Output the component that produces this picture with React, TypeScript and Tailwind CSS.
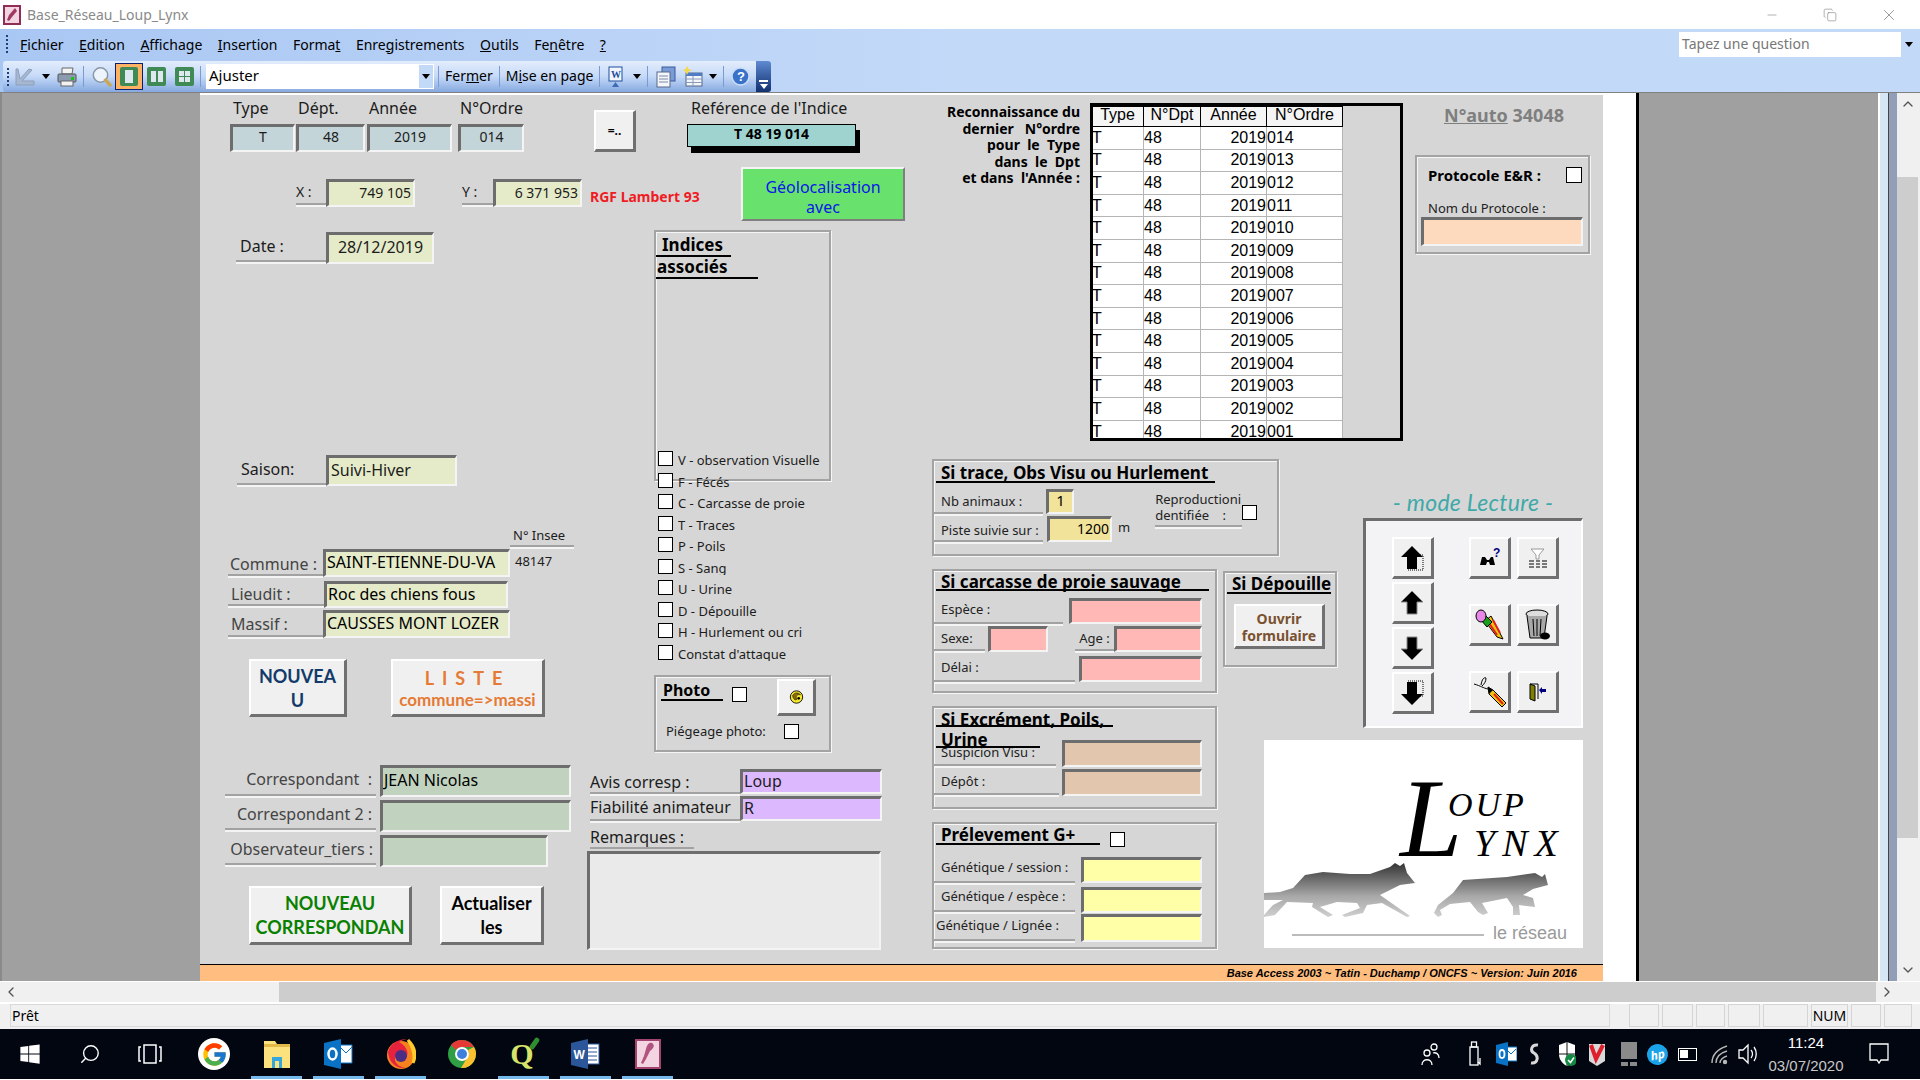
import type { ReactNode } from 'react'
import { ChevronLeft, ChevronRight, ChevronUp, ChevronDown, Minus, X as CloseIcon, Copy, Search } from 'lucide-react'
import { FaWindows } from 'react-icons/fa'
import { FcGoogle } from 'react-icons/fc'

type P = { className?: string; children?: ReactNode }

const Field = ({ className = '', children }: P) => (
  <div className={`box-border flex shrink-0 items-center overflow-hidden whitespace-nowrap border-t-[3px] border-l-[3px] border-r-2 border-b-2 border-t-[#6d6d6d] border-l-[#6d6d6d] border-r-[#f4f4f4] border-b-[#f4f4f4] pb-[3px] ${className}`}>
    {children}
  </div>
)

const Label = ({ className = '', children }: P) => (
  <div className={`box-border flex shrink-0 items-center whitespace-nowrap border-b-2 border-b-[#a2a2a2] shadow-[0_2px_0_#f4f4f4] ${className}`}>
    {children}
  </div>
)

const Raised = ({ className = '', children }: P) => (
  <button className={`box-border flex shrink-0 flex-col items-center justify-center border-t-2 border-l-2 border-t-white border-l-white border-r-[3px] border-b-[3px] border-r-[#707070] border-b-[#707070] bg-[#f0f0f0] ${className}`}>
    {children}
  </button>
)

const Check = ({ className = '' }: P) => (
  <span className={`box-border block h-[15px] w-[15px] shrink-0 border border-black bg-white ${className}`} />
)

const Group = ({ className = '', children }: P) => (
  <div className={`box-border border-2 border-[#a3a3a3] shadow-[1px_1px_0_#f6f6f6,inset_1px_1px_0_#f6f6f6] ${className}`}>
    {children}
  </div>
)

const Title = ({ className = '', children }: P) => (
  <div className={`box-border ml-[2px] flex items-center whitespace-nowrap border-b-2 border-b-black pl-[5px] text-[17px] font-bold text-black ${className}`}>
    {children}
  </div>
)

const Sep = ({ className = '' }: P) => <span className={`h-[21px] w-px shrink-0 bg-[#7a9bcf] ${className}`} />

const ArrowDrop = ({ className = '' }: P) => (
  <span className={`h-0 w-0 shrink-0 border-x-[4px] border-t-[5px] border-x-transparent border-t-black ${className}`} />
)

const menus: [string, string, string][] = [
  ['', 'F', 'ichier'],
  ['', 'E', 'dition'],
  ['', 'A', 'ffichage'],
  ['', 'I', 'nsertion'],
  ['Forma', 't', ''],
  ['Enre', 'g', 'istrements'],
  ['', 'O', 'utils'],
  ['Fe', 'n', 'être'],
  ['', '?', ''],
]

const ordres = ['014', '013', '012', '011', '010', '009', '008', '007', '006', '005', '004', '003', '002', '001']

const indices = [
  'V - observation Visuelle',
  'F - Fécés',
  'C - Carcasse de proie',
  'T - Traces',
  'P - Poils',
  'S - Sang',
  'U - Urine',
  'D - Dépouille',
  'H - Hurlement ou cri',
  "Constat d'attaque",
]

const statusCells = ['w-[30px]', 'w-[31px]', 'w-[29px]', 'w-[32px]', 'w-[45px]', 'w-[37px]', 'w-[30px]', 'w-[28px]']

function TitleBar() {
  return (
    <div className="flex h-[29px] items-center bg-white">
      <svg width="18" height="20" viewBox="0 0 18 20" className="ml-[3px]">
        <rect x="1" y="1" width="16" height="18" fill="#f3d5e2" stroke="#8f2d56" strokeWidth="2" />
        <path d="M12 3 L14 6 L9 12 L6 16 L4 15 L6 10 Z" fill="#a03a63" />
      </svg>
      <span className="ml-[6px] text-[14px] text-[#8a8a8a]">Base_Réseau_Loup_Lynx</span>
      <div className="ml-auto flex items-center text-[#7a7a7a]">
        <Minus size={14} strokeWidth={1} />
        <Copy size={14} strokeWidth={1} className="ml-[44px]" />
        <CloseIcon size={18} strokeWidth={1} className="ml-[43px] mr-[22px]" />
      </div>
    </div>
  )
}

function MenuBar() {
  return (
    <div className="flex h-[32px] items-center pb-[2px]">
      <span className="ml-[6px] h-[18px] w-[2px] border-l-2 border-dotted border-[#1b3f7a]" />
      <div className="ml-[12px] flex gap-[15.5px] text-[14px] text-black">
        {menus.map(([a, b, c]) => (
          <span key={a + b + c}>
            {a}
            <u>{b}</u>
            {c}
          </span>
        ))}
      </div>
      <div className="ml-auto mr-[4px] flex h-[25px] w-[237px] items-center bg-white pl-[3px] text-[14px] text-[#777]">
        <span className="pb-[2px]">Tapez une question</span>
        <span className="ml-auto flex h-full w-[15px] items-center justify-center bg-[#c3d9f8]">
          <ArrowDrop />
        </span>
      </div>
    </div>
  )
}

function Toolbar() {
  return (
    <div className="ml-[3px] flex h-[31px] w-[768px] items-center whitespace-nowrap rounded-l-[3px] rounded-r-[3px] bg-gradient-to-b from-[#e3edfc] via-[#c5d9f7] to-[#86a9e0] text-[14px] text-black">
      <span className="ml-[4px] h-[18px] w-[2px] border-l-2 border-dotted border-[#1b3f7a]" />
      <svg width="20" height="20" viewBox="0 0 20 20" className="ml-[6px]">
        <path d="M1 2 L1 18 L19 18 L19 14 L7 14 L17 3 L14 2 L5 12 L3 2 Z" fill="#a7b7cf" stroke="#8ba0bd" />
      </svg>
      <ArrowDrop className="ml-[7px] border-t-[#7d8ba2]" />
      <svg width="20" height="20" viewBox="0 0 20 20" className="ml-[7px]">
        <path d="M5 1 H16 L15 7 H5 Z" fill="#f4f4f4" stroke="#666" />
        <rect x="1" y="7" width="18" height="8" rx="1" fill="#8d9bb0" stroke="#555" />
        <rect x="4" y="14" width="12" height="5" fill="#f2f2f2" stroke="#666" />
        <rect x="14" y="10" width="3" height="3" fill="#18c218" />
      </svg>
      <Sep className="ml-[6px]" />
      <svg width="20" height="22" viewBox="0 0 20 22" className="ml-[8px]">
        <circle cx="8.5" cy="9" r="7.2" fill="#eef4fb" stroke="#8a97a8" strokeWidth="1.5" />
        <path d="M13.5 14 L18 19" stroke="#c8a85a" strokeWidth="3.5" strokeLinecap="round" />
      </svg>
      <span className="ml-[3px] flex h-[27px] w-[28px] items-center justify-center border border-[#0a1f6e] bg-[#ffb264]">
        <span className="flex h-[19px] w-[18px] items-center justify-center rounded-[2px] bg-[#3f8a55]">
          <span className="h-[13px] w-[8px] bg-[#dfe8ee]" />
        </span>
      </span>
      <span className="ml-[4px] flex h-[19px] w-[19px] items-center justify-center gap-[2px] rounded-[2px] bg-[#3f8a55]">
        <span className="h-[11px] w-[5px] bg-[#dfe8ee]" />
        <span className="h-[11px] w-[5px] bg-[#dfe8ee]" />
      </span>
      <span className="ml-[9px] grid h-[19px] w-[19px] grid-cols-2 place-items-center rounded-[2px] bg-[#3f8a55] p-[3px]">
        <span className="h-[5px] w-[5px] bg-[#dfe8ee]" />
        <span className="h-[5px] w-[5px] bg-[#dfe8ee]" />
        <span className="h-[5px] w-[5px] bg-[#dfe8ee]" />
        <span className="h-[5px] w-[5px] bg-[#dfe8ee]" />
      </span>
      <Sep className="ml-[6px]" />
      <div className="ml-[5px] flex h-[25px] w-[228px] items-center bg-white pl-[3px] text-[15px]">
        <span className="pb-[2px]">Ajuster</span>
        <span className="ml-auto flex h-full w-[16px] items-center justify-center border border-white bg-[#c3d9f8]">
          <ArrowDrop />
        </span>
      </div>
      <Sep className="ml-[4px]" />
      <span className="ml-[6px] pb-[2px]">Fer<u>m</u>er</span>
      <Sep className="ml-[6px]" />
      <span className="ml-[6px] pb-[2px]">M<u>i</u>se en page</span>
      <Sep className="ml-[6px]" />
      <svg width="15" height="22" viewBox="0 0 15 22" className="ml-[8px]">
        <rect x="1" y="1" width="13" height="14" fill="#f2f6fc" stroke="#1d4f9c" />
        <text x="3" y="12" fontSize="10" fontWeight="700" fill="#1d4f9c" fontFamily="Liberation Serif">W</text>
        <path d="M4 21 L7.5 16 L11 21 Z" fill="#3d6bb5" />
      </svg>
      <ArrowDrop className="ml-[10px]" />
      <Sep className="ml-[6px]" />
      <svg width="20" height="22" viewBox="0 0 20 22" className="ml-[8px]">
        <rect x="6" y="1" width="13" height="14" fill="#7a9cd6" stroke="#3a5b9a" />
        <rect x="1" y="6" width="13" height="15" fill="#f4f6fa" stroke="#56688a" />
        <path d="M3 10 H12 M3 13 H12 M3 16 H12" stroke="#7a8aa8" />
      </svg>
      <svg width="20" height="22" viewBox="0 0 20 22" className="ml-[7px]">
        <rect x="3" y="7" width="16" height="13" fill="#f2f5fa" stroke="#56688a" />
        <rect x="3" y="7" width="16" height="3" fill="#4f7cc4" />
        <path d="M3 13 H19 M3 16.5 H19 M10 10 V20" stroke="#8a9ab8" />
        <path d="M4 0 L5.5 3 L9 4 L5.5 5.5 L4 9 L2.5 5.5 L0 4 L2.5 3 Z" fill="#f5d74a" />
      </svg>
      <ArrowDrop className="ml-[6px]" />
      <Sep className="ml-[6px]" />
      <svg width="19" height="19" viewBox="0 0 19 19" className="ml-[7px]">
        <circle cx="9.5" cy="9.5" r="8.5" fill="#3b72c9" stroke="#c9dcf5" strokeWidth="1.5" />
        <text x="6" y="14" fontSize="13" fontWeight="700" fill="#fff" fontFamily="Liberation Sans">?</text>
      </svg>
      <span className="ml-auto flex h-full w-[15px] flex-col items-center justify-end rounded-r-[3px] bg-gradient-to-b from-[#5f8ad2] to-[#12306e] pb-[3px]">
        <span className="mb-[2px] h-[2px] w-[9px] bg-white" />
        <ArrowDrop className="border-t-white" />
      </span>
    </div>
  )
}

function LeftColumn() {
  return (
    <div className="w-[386px] shrink-0 text-[15px] text-[#1c1c1c]">
      <div className="ml-[30px] mt-[6px] grid grid-cols-[66px_71px_91px_66px] grid-rows-[20px_28px] gap-y-[5px] text-[16px] leading-[18px]">
        <span className="pl-[3px]">Type</span>
        <span className="pl-[2px]">Dépt.</span>
        <span className="pl-[2px]">Année</span>
        <span className="pl-[2px]">N°Ordre</span>
        <Field className="h-[28px] w-[65px] justify-center bg-[#c3d5d9] text-[14px]">T</Field>
        <Field className="h-[28px] w-[69px] justify-center bg-[#c3d5d9] text-[14px]">48</Field>
        <Field className="h-[28px] w-[85px] justify-center bg-[#c3d5d9] text-[14px]">2019</Field>
        <Field className="h-[28px] w-[66px] justify-center bg-[#c3d5d9] text-[14px]">014</Field>
      </div>

      <div className="ml-[96px] mt-[27px] flex">
        <Label className="h-[26px] w-[30px] text-[14px]">X :</Label>
        <Field className="h-[28px] w-[89px] justify-end bg-[#e5ebc8] pr-[2px] text-[14px]">749 105</Field>
        <Label className="ml-[47px] h-[26px] w-[31px] text-[14px]">Y :</Label>
        <Field className="h-[28px] w-[89px] justify-end bg-[#e5ebc8] pr-[2px] text-[14px]">6 371 953</Field>
      </div>

      <div className="ml-[36px] mt-[25px] flex">
        <Label className="h-[30px] w-[90px] pl-[4px] text-[16px]">Date :</Label>
        <Field className="h-[32px] w-[108px] justify-center bg-[#e5ebc8] text-[16px]">28/12/2019</Field>
      </div>

      <div className="ml-[37px] mt-[191px] flex">
        <Label className="h-[30px] w-[89px] pl-[4px] text-[16px]">Saison:</Label>
        <Field className="h-[31px] w-[131px] bg-[#e5ebc8] pl-[2px] text-[16px]">Suivi-Hiver</Field>
      </div>

      <Label className="ml-[310px] mt-[40px] h-[21px] w-[64px] pl-[3px] text-[13px]">N° Insee</Label>
      <div className="ml-[28px] mt-[2px] flex">
        <Label className="h-[27px] w-[95px] pl-[2px] pt-[4px] text-[16px] text-[#444]">Commune :</Label>
        <Field className="h-[28px] w-[187px] bg-[#e5ebc8] pl-[1px] text-[16px] text-black">SAINT-ETIENNE-DU-VA</Field>
        <span className="ml-[5px] text-[13px] leading-[24px]">48147</span>
      </div>
      <div className="ml-[28px] mt-[4px] flex">
        <Label className="h-[25px] w-[96px] pl-[3px] pt-[2px] text-[16px] text-[#444]">Lieudit :</Label>
        <Field className="h-[27px] w-[184px] bg-[#e5ebc8] pl-[1px] text-[16px] text-black">Roc des chiens fous</Field>
      </div>
      <div className="ml-[28px] mt-[2px] flex">
        <Label className="h-[27px] w-[95px] pl-[3px] pt-[2px] text-[16px] text-[#444]">Massif :</Label>
        <Field className="h-[28px] w-[187px] bg-[#e5ebc8] pl-[1px] text-[16px] text-black">CAUSSES MONT LOZER</Field>
      </div>

      <div className="ml-[49px] mt-[21px] flex gap-[44px]">
        <Raised className="h-[58px] w-[98px] font-['Lato',sans-serif] text-[18px] font-bold leading-[24px] text-[#123a6b]">
          <span>NOUVEA</span>
          <span>U</span>
        </Raised>
        <Raised className="h-[58px] w-[154px] font-['Lato',sans-serif] font-bold text-[#e57a35]">
          <span className="text-[18px] leading-[24px] tracking-[8px]">LISTE</span>
          <span className="text-[17px] leading-[20px]">commune=&gt;massi</span>
        </Raised>
      </div>

      <div className="ml-[25px] mt-[48px] flex">
        <Label className="h-[31px] w-[151px] justify-end pb-[2px] pr-[4px] text-[16px] text-[#444]">Correspondant&nbsp;&nbsp;:</Label>
        <Field className="ml-[4px] h-[32px] w-[191px] bg-[#c1d3bf] pl-[1px] text-[16px] text-black">JEAN Nicolas</Field>
      </div>
      <div className="ml-[25px] mt-[3px] flex">
        <Label className="h-[30px] w-[151px] justify-end pr-[4px] text-[16px] text-[#444]">Correspondant 2 :</Label>
        <Field className="ml-[4px] h-[32px] w-[191px] bg-[#c1d3bf]" />
      </div>
      <div className="ml-[25px] mt-[3px] flex">
        <Label className="h-[30px] w-[151px] justify-end pr-[3px] text-[16px] text-[#444]">Observateur_tiers :</Label>
        <Field className="ml-[4px] h-[32px] w-[168px] bg-[#c1d3bf]" />
      </div>

      <div className="ml-[49px] mt-[19px] flex gap-[28px]">
        <Raised className="h-[59px] w-[163px] font-['Lato',sans-serif] text-[18px] font-bold leading-[24px] text-[#0a8000]">
          <span>NOUVEAU</span>
          <span>CORRESPONDAN</span>
        </Raised>
        <Raised className="h-[59px] w-[104px] font-['Lato',sans-serif] text-[18px] font-bold leading-[24px] text-black">
          <span>Actualiser</span>
          <span>les</span>
        </Raised>
      </div>
    </div>
  )
}

function MiddleColumn() {
  return (
    <div className="w-[346px] shrink-0 text-[14px] text-[#1c1c1c]">
      <div className="flex">
        <Raised className="ml-[8px] mt-[17px] h-[42px] w-[42px] text-[12px] font-bold leading-none text-black">=..</Raised>
        <div className="ml-[51px] pt-[6px]">
          <div className="h-[20px] whitespace-nowrap pl-[4px] text-[16px] leading-[18px]">Reférence de l'Indice</div>
          <div className="mt-[5px] flex h-[23px] w-[169px] justify-center border border-black bg-[#9fd3d0] text-[14px] font-bold leading-[18px] text-black shadow-[4px_6px_0_#000]">
            T 48 19 014
          </div>
        </div>
      </div>

      <div className="ml-[4px] mt-[15px] flex">
        <span className="mt-[19px] w-[151px] text-[14px] font-bold text-[#f01c24]">RGF Lambert 93</span>
        <div className="box-border flex h-[54px] w-[164px] flex-col items-center justify-center border-2 border-t-[#f4f4f4] border-l-[#f4f4f4] border-r-[#7f7f7f] border-b-[#7f7f7f] bg-[#68e26c] pt-[5px] text-[16px] leading-[20px] text-[#0a18e8]">
          <span>Géolocalisation</span>
          <span>avec</span>
        </div>
      </div>

      <Group className="ml-[68px] mt-[9px] h-[251px] w-[177px]">
        <div className="mt-[3px] text-[17px] font-bold leading-[20px] text-black">
          <div className="w-[75px] border-b-2 border-black pl-[6px]">Indices</div>
          <div className="w-[102px] border-b-2 border-black pl-[1px]">associés</div>
        </div>
      </Group>
      <div className="ml-[72px] mt-[-30px]">
        {indices.map((t) => (
          <div key={t} className="flex h-[21.5px] items-start">
            <Check />
            <span className="ml-[5px] h-[16px] overflow-hidden text-[13px] leading-[18px]">{t}</span>
          </div>
        ))}
      </div>

      <Group className="ml-[68px] mt-[9px] h-[77px] w-[177px]">
        <div className="flex">
          <div className="ml-[5px] mt-[3px] h-[21px] w-[62px] border-b-2 border-black text-[16px] font-bold leading-[20px] text-black">
            <span className="pl-[2px]">Photo</span>
          </div>
          <Check className="ml-[9px] mt-[10px]" />
          <Raised className="ml-[30px] mt-[2px] h-[37px] w-[39px]">
            <svg width="15" height="16" viewBox="0 0 17 17">
              <circle cx="8.5" cy="8.5" r="7" fill="#f7e92c" stroke="#000" />
              <path d="M4 7 C6 3 11 3 13 6 C9 5 7 8 9 11 C7 13 5 11 4 7 Z" fill="#8a6a10" stroke="#000" strokeWidth="0.6" />
              <circle cx="11" cy="10" r="1.5" fill="#000" />
            </svg>
          </Raised>
        </div>
        <div className="mt-[6px] flex items-center">
          <span className="ml-[10px] w-[118px] text-[13px]">Piégeage photo:</span>
          <Check />
        </div>
      </Group>

      <div className="ml-[4px] mt-[17px] flex">
        <Label className="h-[25px] w-[150px] pt-[2px] text-[16px]">Avis corresp :</Label>
        <Field className="h-[25px] w-[142px] bg-[#dcb9ff] pl-[1px] text-[16px]">Loup</Field>
      </div>
      <div className="ml-[4px] mt-[2px] flex">
        <Label className="h-[25px] w-[150px] pb-[2px] text-[16px]">Fiabilité animateur</Label>
        <Field className="h-[25px] w-[142px] bg-[#dcb9ff] pl-[1px] text-[16px]">R</Field>
      </div>
      <div className="ml-[4px] mt-[5px] h-[23px] w-[104px] overflow-hidden border-b-2 border-b-[#a2a2a2] text-[16px] leading-[22px]">Remarques :</div>
      <Field className="ml-[1px] mt-[2px] h-[99px] w-[294px] bg-[#eaeaea]" />
    </div>
  )
}

function Reconnaissance() {
  return (
    <div className="ml-[14px] mt-[11px] w-[134px] shrink-0 whitespace-nowrap text-right text-[14px] font-bold leading-[16.5px] text-black">
      <div>Reconnaissance du</div>
      <div>dernier&nbsp;&nbsp;&nbsp;N°ordre</div>
      <div>pour&nbsp;&nbsp;le&nbsp;&nbsp;Type</div>
      <div>dans&nbsp;&nbsp;le&nbsp;&nbsp;Dpt</div>
      <div>et dans&nbsp;&nbsp;l'Année&nbsp;:</div>
    </div>
  )
}

function SubForm() {
  return (
    <div className="ml-[10px] mt-[10px] box-border h-[338px] w-[313px] shrink-0 overflow-hidden border-[3px] border-black font-['Liberation_Sans',sans-serif] text-[16px] text-black">
      <table className="ml-[-2px] w-[251px] table-fixed border-collapse bg-white">
        <colgroup>
          <col className="w-[52px]" />
          <col className="w-[57px]" />
          <col className="w-[66px]" />
          <col className="w-[76px]" />
        </colgroup>
        <thead>
          <tr className="h-[20px] bg-[#f5f5f5] text-center">
            <th className="border border-black p-0 pb-[3px] font-normal leading-none">Type</th>
            <th className="border border-black p-0 pb-[3px] font-normal leading-none">N°Dpt</th>
            <th className="border border-black p-0 pb-[3px] font-normal leading-none">Année</th>
            <th className="border border-black p-0 pb-[3px] font-normal leading-none">N°Ordre</th>
          </tr>
        </thead>
        <tbody>
          {ordres.map((o) => (
            <tr key={o} className="h-[22.6px]">
              <td className="border border-[#b5b5b5] p-0 leading-none">T</td>
              <td className="border border-[#b5b5b5] p-0 leading-none">48</td>
              <td className="border border-[#b5b5b5] p-0 text-right leading-none">2019</td>
              <td className="border border-[#b5b5b5] p-0 leading-none">{o}</td>
            </tr>
          ))}
        </tbody>
      </table>
    </div>
  )
}

function Protocole() {
  return (
    <div className="ml-[12px] w-[175px] shrink-0">
      <div className="ml-[29px] mt-[10px] h-[22px] whitespace-nowrap text-[18px] font-bold leading-[24px] text-[#7f7f7f]">
        <u>N°auto</u> 34048
      </div>
      <Group className="mt-[30px] h-[99px] w-[175px]">
        <div className="mt-[7px] flex items-center pl-[11px]">
          <span className="w-[138px] whitespace-nowrap text-[15px] font-bold text-black">Protocole E&amp;R :</span>
          <Check className="h-[16px] w-[16px]" />
        </div>
        <div className="mt-[12px] pl-[11px] text-[13px] leading-[18px] text-[#222]">Nom du Protocole :</div>
        <Field className="ml-[4px] mt-[0px] h-[29px] w-[162px] bg-[#fdd9bd]" />
      </Group>
    </div>
  )
}

function SiTrace() {
  return (
    <Group className="h-[97px] w-[347px] text-[13px] text-[#222]">
      <Title className="h-[22px] w-[279px] pt-[3px]">Si trace, Obs Visu ou Hurlement</Title>
      <div className="mt-[3px] flex">
        <div>
          <div className="flex">
            <Label className="h-[28px] w-[109px] pl-[7px] pt-[6px]">Nb animaux :</Label>
            <Field className="ml-[3px] mt-[3px] h-[25px] w-[28px] justify-center bg-[#f2e39b] text-[15px] text-black">1</Field>
          </div>
          <div className="mt-[2px] flex">
            <Label className="h-[26px] w-[109px] pl-[7px] pt-[5px]">Piste suivie sur :</Label>
            <Field className="ml-[4px] h-[26px] w-[65px] justify-end bg-[#f2e39b] pr-[1px] text-[14px] text-black">1200</Field>
            <span className="ml-[6px] leading-[22px]">m</span>
          </div>
        </div>
        <div className="ml-[25px] mt-[5px] flex">
          <Label className="h-[36px] w-[87px] flex-col items-start text-[13px] leading-[16px]">
            <span>Reproductioni</span>
            <span>dentifiée&nbsp;&nbsp;&nbsp;&nbsp;:</span>
          </Label>
          <Check className="mt-[14px]" />
        </div>
      </div>
    </Group>
  )
}

function SiCarcasse() {
  return (
    <Group className="h-[124px] w-[285px] text-[13px] text-[#222]">
      <Title className="h-[20px] w-[273px] pt-[3px]">Si carcasse de proie sauvage</Title>
      <div className="mt-[7px] flex">
        <Label className="h-[26px] w-[129px] pl-[7px]">Espèce :</Label>
        <Field className="ml-[6px] h-[26px] w-[133px] bg-[#ffb8b6]" />
      </div>
      <div className="mt-[2px] flex">
        <Label className="h-[25px] w-[51px] pl-[7px] pt-[2px]">Sexe:</Label>
        <Field className="ml-[3px] h-[26px] w-[60px] bg-[#ffb8b6]" />
        <Label className="ml-[27px] h-[25px] w-[39px] justify-center pt-[2px]">Age :</Label>
        <Field className="h-[26px] w-[88px] bg-[#ffb8b6]" />
      </div>
      <div className="mt-[4px] flex">
        <Label className="h-[26px] w-[141px] pl-[7px]">Délai :</Label>
        <Field className="ml-[4px] h-[26px] w-[123px] bg-[#ffb8b6]" />
      </div>
    </Group>
  )
}

function SiDepouille() {
  return (
    <Group className="ml-[6px] mt-[2px] h-[96px] w-[114px]">
      <Title className="h-[21px] w-[104px] pl-[4px] pt-[2px]">Si Dépouille</Title>
      <Raised className="ml-[9px] mt-[10px] h-[45px] w-[91px] pt-[2px] text-[14px] font-bold leading-[17px] text-[#7a5230]">
        <span>Ouvrir</span>
        <span>formulaire</span>
      </Raised>
    </Group>
  )
}

function SiExcrement() {
  return (
    <Group className="mt-[13px] h-[103px] w-[285px] text-[13px] text-[#222]">
      <div className="relative z-10">
        <Title className="h-[19px] w-[177px] pt-[6px]">Si Excrément, Poils,</Title>
        <Title className="h-[21px] w-[104px] pl-0 pt-[6px]">Urine</Title>
      </div>
      <div className="mt-[-8px] flex">
        <Label className="h-[26px] w-[122px] pl-[7px] pt-[1px]">Suspicion Visu :</Label>
        <Field className="ml-[6px] h-[27px] w-[140px] bg-[#e2c7ae]" />
      </div>
      <div className="mt-[2px] flex">
        <Label className="h-[26px] w-[125px] pl-[7px] pt-[1px]">Dépôt :</Label>
        <Field className="ml-[3px] h-[27px] w-[140px] bg-[#e2c7ae]" />
      </div>
    </Group>
  )
}

function Prelevement() {
  return (
    <Group className="mt-[13px] h-[127px] w-[285px] text-[13px] text-[#222]">
      <div className="flex">
        <Title className="h-[21px] w-[164px] pt-[3px]">Prélevement G+</Title>
        <Check className="ml-[10px] mt-[8px]" />
      </div>
      <div className="mt-[10px] flex">
        <Label className="h-[26px] w-[141px] pb-[2px] pl-[7px]">Génétique / session :</Label>
        <Field className="ml-[6px] h-[26px] w-[121px] bg-[#ffffa8]" />
      </div>
      <div className="mt-[4px] flex">
        <Label className="h-[25px] w-[141px] pb-[3px] pl-[7px]">Génétique / espèce :</Label>
        <Field className="ml-[6px] h-[26px] w-[121px] bg-[#ffffa8]" />
      </div>
      <div className="mt-[1px] flex">
        <Label className="h-[27px] w-[141px] pb-[2px] pl-[2px]">Génétique / Lignée :</Label>
        <Field className="ml-[6px] h-[28px] w-[121px] bg-[#ffffa8]" />
      </div>
    </Group>
  )
}

const UpArrow = ({ bar = false }: { bar?: boolean }) => (
  <svg width="26" height="28" viewBox="0 0 26 28">
    {bar && <path d="M18 11 H23 V26 H8" fill="none" stroke="#000" strokeDasharray="1 1" />}
    <path d="M12 2 L23 13 H17 V25 H7 V13 H1 Z" fill="#000" stroke={bar ? 'none' : '#888'} />
  </svg>
)

const DownArrow = ({ bar = false }: { bar?: boolean }) => (
  <svg width="26" height="28" viewBox="0 0 26 28">
    {bar && <path d="M8 2 H23 V17 H18" fill="none" stroke="#000" strokeDasharray="1 1" />}
    <path d="M12 26 L23 15 H17 V3 H7 V15 H1 Z" fill="#000" stroke={bar ? 'none' : '#888'} />
  </svg>
)

function ModeLecture() {
  const btn = 'h-[42px] w-[42px]'
  return (
    <div className="ml-[26px] w-[220px] shrink-0">
      <div className="mt-[29px] h-[30px] whitespace-nowrap text-center font-['Lato',sans-serif] text-[23px] italic leading-[28px] tracking-[0.3px] text-[#3fa9a9]">- mode Lecture -</div>
      <div className="box-border h-[210px] w-[220px] border-t-[3px] border-l-[3px] border-r-2 border-b-2 border-t-[#6d6d6d] border-l-[#6d6d6d] border-r-white border-b-white bg-[#f3f3f6] pl-[26px] pt-[16px]">
        <div className="flex">
          <div className="flex flex-col gap-[3px]">
            <Raised className={btn}><UpArrow bar /></Raised>
            <Raised className={btn}><UpArrow /></Raised>
            <Raised className={btn}><DownArrow /></Raised>
            <Raised className={btn}><DownArrow bar /></Raised>
          </div>
          <div className="ml-[35px] grid h-[176px] grid-cols-[42px_42px] grid-rows-[42px_42px_42px] justify-between gap-x-[6px] content-between">
            <Raised className={btn}>
              <svg width="22" height="20" viewBox="0 0 22 20">
                <path d="M1 17 L3 9 H6 L8 12 H10 L12 9 H14 L16 17 H11 L10 14 H8 L7 17 Z" fill="#000" />
                <text x="14" y="9" fontSize="12" fontWeight="700" fill="#000080" fontFamily="Liberation Sans">?</text>
              </svg>
            </Raised>
            <Raised className={btn}>
              <svg width="20" height="20" viewBox="0 0 20 20">
                <path d="M3 1 H16 L11 7 V11 H8 V7 Z" fill="#fff" stroke="#9a9a9a" />
                <path d="M1 13 H6 M8 13 H12 M14 13 H19 M1 16 H6 M8 16 H12 M14 16 H19 M1 19 H6 M8 19 H12 M14 19 H19" stroke="#000" />
              </svg>
            </Raised>
            <Raised className={btn}>
              <svg width="30" height="32" viewBox="0 0 30 32">
                <path d="M22 28 L10 12 L16 7 L28 30 Z" fill="#f0c40e" stroke="#000" />
                <path d="M22 26 L14 14 M25 24 L18 11" stroke="#e02020" strokeWidth="2" />
                <path d="M6 11 L12 18 L17 13 L11 7 Z" fill="#1aa01a" stroke="#000" />
                <ellipse cx="6" cy="7" rx="5" ry="6" fill="#e887e8" stroke="#000" />
              </svg>
            </Raised>
            <Raised className={btn}>
              <svg width="26" height="32" viewBox="0 0 26 32">
                <ellipse cx="12" cy="5" rx="11" ry="4" fill="#ddd" stroke="#000" />
                <path d="M2 7 L5 29 H19 L22 7" fill="#a8a8a8" stroke="#000" />
                <path d="M8 10 L9 27 M12 10 V27 M16 10 L15 27" stroke="#000" />
                <ellipse cx="20" cy="27" rx="5" ry="3.5" fill="#000" />
              </svg>
            </Raised>
            <Raised className={btn}>
              <svg width="34" height="32" viewBox="0 0 34 32">
                <path d="M1 8 C8 10 10 12 15 13 M8 9 C9 3 11 1 13 2 C13 6 11 8 9 10" fill="none" stroke="#000" />
                <path d="M15 11 L20 14 L33 27 L29 31 L16 18 Z" fill="#f0c40e" stroke="#000" />
                <path d="M21 18 L30 28" stroke="#e02020" strokeWidth="2" />
                <path d="M15 11 L20 14 L16 18 Z" fill="#000" />
              </svg>
            </Raised>
            <Raised className={btn}>
              <svg width="18" height="20" viewBox="0 0 18 20">
                <path d="M1 2 H9 V17" fill="none" stroke="#000" />
                <path d="M1 2 L6 4 V19 L1 17 Z" fill="#808000" stroke="#000" />
                <path d="M10 8 L13 5 V7 H17 V10 H13 V12 Z" fill="#000080" />
              </svg>
            </Raised>
          </div>
        </div>
      </div>
      <svg width="319" height="208" viewBox="0 0 319 208" className="ml-[-99px] mt-[12px] block bg-white">
        <defs>
          <linearGradient id="wolf" gradientUnits="userSpaceOnUse" x1="0" y1="125" x2="0" y2="177">
            <stop offset="0" stopColor="#3a3a3a" />
            <stop offset="0.6" stopColor="#a8a8a8" />
            <stop offset="1" stopColor="#cfcfcf" />
          </linearGradient>
        </defs>
        <text x="136" y="116" fontFamily="Liberation Serif" fontStyle="italic" fontSize="112" fill="#000">L</text>
        <text x="184" y="76" fontFamily="Liberation Serif" fontStyle="italic" fontSize="34" letterSpacing="3" fill="#000">OUP</text>
        <text x="210" y="116" fontFamily="Liberation Serif" fontStyle="italic" fontSize="38" letterSpacing="7" fill="#000">YNX</text>
        <path d="M151 143 L143 133 L140 123 L136 126 L131 123 L126 127 L106 134 L86 134 L59 132 L41 135 L29 148 L16 152 L0 153 L0 160 L19 160 L9 165 L0 175 L0 177 L11 175 L23 162 L49 163 L48 167 L64 177 L69 175 L56 167 L73 162 L93 163 L96 168 L78 175 L81 177 L99 173 L103 165 L118 163 L143 177 L146 176 L116 155 L126 150 L136 145 Z" fill="url(#wolf)" />
        <path d="M284 145 L281 134 L278 137 L271 133 L243 137 L199 140 L189 153 L174 165 L170 173 L174 177 L178 175 L176 170 L186 164 L206 162 L214 172 L219 175 L224 173 L218 163 L243 158 L249 167 L249 175 L256 175 L255 165 L271 167 L269 158 L259 155 L269 149 Z" fill="url(#wolf)" />
        <path d="M28 195 H220" stroke="#bbb" strokeWidth="2" />
        <text x="229" y="199" fontFamily="Liberation Sans" fontSize="18" fill="#9a9a9a">le réseau</text>
      </svg>
    </div>
  )
}

function RightColumn() {
  return (
    <div className="w-[671px] shrink-0 text-[#1c1c1c]">
      <div className="flex h-[366px]">
        <Reconnaissance />
        <SubForm />
        <Protocole />
      </div>
      <div className="flex">
        <div className="w-[405px] shrink-0">
          <SiTrace />
          <div className="mt-[13px] flex items-start">
            <SiCarcasse />
            <SiDepouille />
          </div>
          <SiExcrement />
          <Prelevement />
        </div>
        <ModeLecture />
      </div>
    </div>
  )
}

function Body() {
  return (
    <div className="flex h-[889px] border-t border-t-[#808080]">
      <div className="w-[200px] shrink-0 border-l-2 border-l-[#8a8a8a] bg-[#a0a0a0]" />
      <div className="w-[1403px] shrink-0 bg-[#d6d6d6] shadow-[inset_0_2px_0_#fff]">
        <div className="flex h-[871px] overflow-hidden">
          <LeftColumn />
          <MiddleColumn />
          <RightColumn />
        </div>
        <div className="flex h-[17px] items-center justify-end border-t border-t-black bg-[#ffbe80] pr-[26px] font-['Liberation_Sans',sans-serif] text-[11px] font-bold italic text-black">
          Base Access 2003 ~ Tatin - Duchamp / ONCFS ~ Version: Juin 2016
        </div>
      </div>
      <div className="w-[33px] shrink-0 bg-white" />
      <div className="w-[3px] shrink-0 bg-black" />
      <div className="w-[239px] shrink-0 bg-[#a0a0a0]" />
      <div className="w-[2px] shrink-0 bg-white" />
      <div className="w-[8px] shrink-0 bg-[#d6e6f4]" />
      <div className="w-px shrink-0 bg-[#444]" />
      <div className="w-[8px] shrink-0 bg-[#929db8]" />
      <div className="flex w-[23px] shrink-0 flex-col items-center bg-[#f0f0f0] pr-[2px] text-[#555]">
        <ChevronUp size={16} className="mt-[3px]" />
        <div className="mt-[65px] h-[661px] w-full bg-[#cdcdcd]" />
        <ChevronDown size={16} className="mt-auto mb-[3px]" />
      </div>
    </div>
  )
}

function HScroll() {
  return (
    <div className="mt-px flex h-[20px] items-center bg-[#f0f0f0] text-[#555]">
      <ChevronLeft size={16} className="ml-[3px]" />
      <div className="ml-[260px] h-full w-[1597px] bg-[#cdcdcd]" />
      <ChevronRight size={16} className="ml-[3px]" />
    </div>
  )
}

function StatusBar() {
  return (
    <div className="mt-[2px] flex h-[25px] items-stretch bg-[#f0f0f0] pb-[2px] pl-[10px] text-[14px] text-black">
      <div className="flex w-[1600px] items-center border border-[#d9d9d9] pl-px">Prêt</div>
      <div className="ml-[19px] flex gap-[3px]">
        {statusCells.map((w, i) => (
          <div key={i} className={`flex items-center justify-center border border-[#d4d4d4] ${w}`}>
            {i === 5 ? 'NUM' : ''}
          </div>
        ))}
      </div>
    </div>
  )
}

const TaskSlot = ({ active = false, children }: { active?: boolean; children: ReactNode }) => (
  <div className={`box-border flex h-[50px] w-[51px] shrink-0 items-center justify-center ${active ? 'border-b-[3px] border-b-[#76b9ed] pt-[3px]' : ''}`}>
    {children}
  </div>
)

function Taskbar() {
  return (
    <div className="flex h-[50px] items-center bg-[#010610] text-white">
      <FaWindows size={22} className="ml-[19px]" />
      <Search size={22} strokeWidth={1.5} className="ml-[38px] -scale-x-100" />
      <svg width="24" height="24" viewBox="0 0 24 24" className="ml-[37px]" fill="none" stroke="#fff" strokeWidth="1.5">
        <rect x="6" y="3" width="12" height="18" />
        <path d="M3 5 H1 V19 H3 M21 5 H23 V19 H21" />
      </svg>
      <div className="ml-[36px] flex h-[32px] w-[32px] items-center justify-center rounded-full bg-white">
        <FcGoogle size={27} />
      </div>
      <div className="ml-[21px] flex">
        <TaskSlot active>
          <svg width="28" height="30" viewBox="0 0 28 30">
            <path d="M1 2 H12 L14 5 H27 V29 H1 Z" fill="#fbe27c" />
            <rect x="1" y="5" width="26" height="3" fill="#e0b94a" />
            <path d="M9 29 V18 H19 V29 H16 V22 H12 V29 Z" fill="#35a7de" />
          </svg>
        </TaskSlot>
        <div className="w-[11px]" />
        <TaskSlot active>
          <svg width="29" height="30" viewBox="0 0 29 30">
            <path d="M16 6 H28 V24 H16 Z" fill="#fff" stroke="#0a72c4" />
            <path d="M16 8 L22 14 L28 8" fill="none" stroke="#0a72c4" />
            <path d="M0 4 L17 0 V30 L0 26 Z" fill="#0a72c4" />
            <ellipse cx="8.5" cy="15" rx="4" ry="5.5" fill="none" stroke="#fff" strokeWidth="2.5" />
          </svg>
        </TaskSlot>
        <div className="w-[11px]" />
        <TaskSlot active>
          <svg width="30" height="32" viewBox="0 0 30 32">
            <circle cx="15" cy="17" r="14" fill="#f5821f" />
            <path d="M2 14 C3 26 12 31 20 30 C12 29 8 24 9 19 C11 13 20 15 20 20 C24 14 19 7 13 4 C17 2 20 1 22 1 C10 1 4 7 2 14 Z" fill="#e6223f" />
            <path d="M22 2 C28 8 31 16 27 25 C30 16 26 8 22 2 Z" fill="#ffcb2d" stroke="#ffcb2d" strokeWidth="3" />
            <circle cx="15" cy="18" r="6" fill="#4b2e83" />
          </svg>
        </TaskSlot>
        <div className="w-[21px]" />
        <svg width="30" height="30" viewBox="0 0 30 30" className="mt-[10px]">
          <circle cx="15" cy="15" r="14" fill="#2f9e44" />
          <path d="M15 1 A14 14 0 0 1 27 8 H15 A7 7 0 0 0 9 11 L4 6 A14 14 0 0 1 15 1 Z" fill="#e53935" />
          <path d="M27 8 A14 14 0 0 1 14 29 L20 19 A7 7 0 0 0 21 11 Z" fill="#fbc02d" />
          <circle cx="15" cy="15" r="7" fill="#fff" />
          <circle cx="15" cy="15" r="5" fill="#3f7fdc" />
        </svg>
        <div className="w-[21px]" />
        <TaskSlot active>
          <span className="relative pr-[3px] font-['Liberation_Serif',serif] text-[30px] font-bold leading-none text-[#d7e36a]">
            Q
            <span className="absolute right-[0px] top-[-2px] h-[13px] w-[5px] rotate-[35deg] rounded-full bg-[#2f8f2f]" />
          </span>
        </TaskSlot>
        <div className="w-[11px]" />
        <TaskSlot active>
          <svg width="29" height="30" viewBox="0 0 29 30">
            <rect x="14" y="5" width="14" height="20" fill="#fff" stroke="#2b579a" />
            <path d="M17 9 H26 M17 13 H26 M17 17 H26 M17 21 H26" stroke="#2b579a" />
            <path d="M0 4 L17 0 V30 L0 26 Z" fill="#2b579a" />
            <text x="2.5" y="20" fontFamily="Liberation Sans" fontSize="12" fontWeight="700" fill="#fff">W</text>
          </svg>
        </TaskSlot>
        <div className="w-[11px]" />
        <TaskSlot active>
          <svg width="26" height="30" viewBox="0 0 26 30">
            <rect x="1" y="1" width="24" height="28" fill="#f3d5e2" stroke="#a34470" strokeWidth="2" />
            <path d="M17 4 C20 6 19 9 15 12 L11 20 L8 25 L6 24 L9 17 L11 10 C12 6 14 3 17 4 Z" fill="#b2527e" />
          </svg>
        </TaskSlot>
      </div>

      <div className="ml-auto flex items-center">
        <svg width="20" height="24" viewBox="0 0 20 24" fill="none" stroke="#fff" strokeWidth="1.3">
          <circle cx="13" cy="5" r="3" />
          <circle cx="6" cy="11" r="3" />
          <path d="M1 23 C1 16 11 16 11 23 M12 11 C15 10 18 12 18 16" />
        </svg>
        <svg width="14" height="26" viewBox="0 0 14 26" className="ml-[27px]" fill="none" stroke="#fff" strokeWidth="1.3">
          <rect x="2" y="6" width="8" height="18" />
          <rect x="3.5" y="1" width="5" height="5" />
          <path d="M12 17 V23 L10 21" />
        </svg>
        <svg width="21" height="24" viewBox="0 0 21 24" className="ml-[14px]">
          <rect x="9" y="5" width="12" height="14" fill="#fff" stroke="#0a72c4" />
          <path d="M10 7 L15 12 L20 7" fill="none" stroke="#0a72c4" />
          <path d="M0 3 L12 0 V24 L0 21 Z" fill="#0a72c4" />
          <ellipse cx="6" cy="12" rx="2.5" ry="4" fill="none" stroke="#fff" strokeWidth="1.8" />
        </svg>
        <svg width="11" height="24" viewBox="0 0 11 24" className="ml-[12px]" fill="none" stroke="#d8d8d8" strokeWidth="3">
          <path d="M9 3 C2 2 1 9 5 11 C10 14 9 22 2 21" />
        </svg>
        <svg width="18" height="26" viewBox="0 0 18 26" className="ml-[18px]">
          <path d="M9 1 L17 4 V13 C17 19 13 23 9 25 C5 23 1 19 1 13 V4 Z" fill="#fff" />
          <path d="M9 1 V25 M1 13 H17" stroke="#111" strokeWidth="1" />
          <circle cx="13" cy="19" r="6" fill="#138a43" />
          <path d="M10 19 L12.5 21.5 L16 16.5" fill="none" stroke="#fff" strokeWidth="1.5" />
        </svg>
        <svg width="18" height="26" viewBox="0 0 18 26" className="ml-[12px]">
          <path d="M1 3 H17 V20 L9 25 L1 20 Z" fill="#d9d9d9" />
          <path d="M3 4 L8 18 L15 4" fill="none" stroke="#e01f2d" strokeWidth="4" />
        </svg>
        <svg width="18" height="26" viewBox="0 0 18 26" className="ml-[14px]">
          <rect x="1" y="1" width="16" height="17" fill="#8a8a8a" />
          <rect x="1" y="21" width="7" height="4" fill="#8a8a8a" />
          <rect x="10" y="21" width="7" height="4" fill="#8a8a8a" />
        </svg>
        <div className="ml-[9px] flex h-[21px] w-[21px] -rotate-12 items-center justify-center rounded-full bg-[#1aa3e8] text-[12px] font-bold italic text-white">hp</div>
        <div className="ml-[10px] flex h-[13px] w-[19px] items-center border-[1.5px] border-white pl-px">
          <span className="h-[8px] w-[8px] bg-white" />
        </div>
        <svg width="18" height="22" viewBox="0 0 18 22" className="ml-[13px]" fill="none" stroke="#b8b8b8" strokeWidth="1.4">
          <path d="M2 20 C2 12 8 6 17 3 M6 20 C6 14 10 10 17 8 M10 20 C10 17 13 14 17 13" />
          <circle cx="15" cy="19" r="1.5" fill="#b8b8b8" />
        </svg>
        <svg width="21" height="24" viewBox="0 0 21 24" className="ml-[10px]" fill="none" stroke="#fff" strokeWidth="1.3">
          <path d="M1 8 H5 L10 3 V21 L5 16 H1 Z" />
          <path d="M13 8 C15 10 15 14 13 16 M16 5 C19 9 19 15 16 19" />
        </svg>
        <div className="ml-[8px] flex w-[78px] flex-col items-center font-['Liberation_Sans',sans-serif] text-[15px] leading-[23px]">
          <span>11:24</span>
          <span className="text-[#c8c8c8]">03/07/2020</span>
        </div>
        <svg width="20" height="22" viewBox="0 0 20 22" className="ml-[24px] mr-[31px]" fill="none" stroke="#fff" strokeWidth="1.3">
          <path d="M1 1 H19 V17 H12 L10 20 L8 17 H1 Z" />
        </svg>
      </div>
    </div>
  )
}

export default function App() {
  return (
    <div className="h-[1080px] w-[1920px] overflow-hidden bg-white font-['Noto_Sans',sans-serif]">
      <TitleBar />
      <div className="h-[63px] bg-gradient-to-r from-[#a9c7f3] via-[#c3d9f8] to-[#c3d9f8]">
        <MenuBar />
        <Toolbar />
      </div>
      <Body />
      <HScroll />
      <StatusBar />
      <Taskbar />
    </div>
  )
}
